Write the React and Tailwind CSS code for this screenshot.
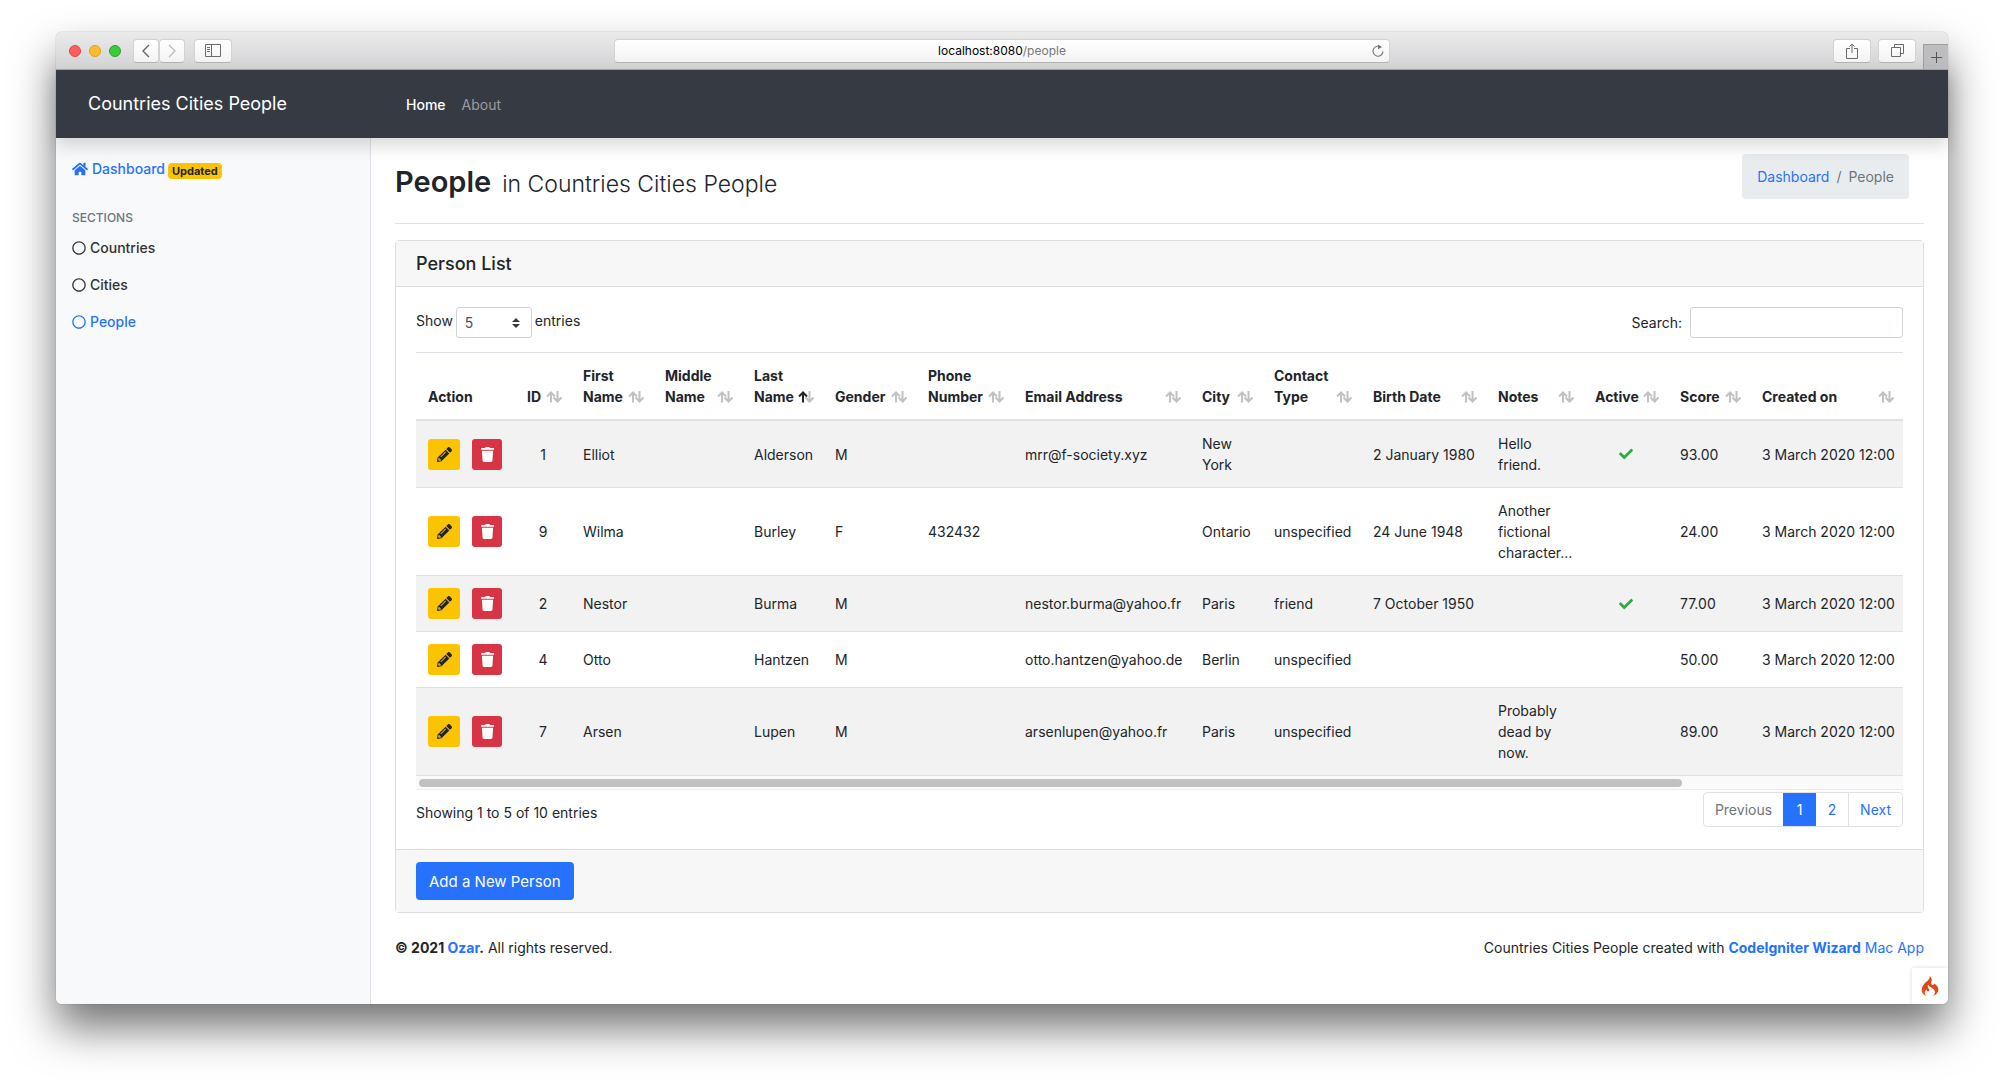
import React from "react";
import { FaHome, FaRegCircle, FaCheck, FaPencilAlt, FaTrash } from "react-icons/fa";
import { SiCodeigniter } from "react-icons/si";

const columns = [
  { label: "Action", width: 99, sort: null },
  { label: "ID", width: 56, sort: "none" },
  { label: "First Name", width: 82, sort: "none" },
  { label: "Middle Name", width: 89, sort: "none" },
  { label: "Last Name", width: 81, sort: "asc" },
  { label: "Gender", width: 93, sort: "none" },
  { label: "Phone Number", width: 97, sort: "none" },
  { label: "Email Address", width: 177, sort: "none" },
  { label: "City", width: 72, sort: "none" },
  { label: "Contact Type", width: 99, sort: "none" },
  { label: "Birth Date", width: 125, sort: "none" },
  { label: "Notes", width: 97, sort: "none" },
  { label: "Active", width: 85, sort: "none" },
  { label: "Score", width: 82, sort: "none" },
  { label: "Created on", width: 153, sort: "none" },
];

const people = [
  { id: 1, first: "Elliot", last: "Alderson", gender: "M", phone: "", email: "mrr@f-society.xyz", city: "New York", type: "", birth: "2 January 1980", notes: "Hello friend.", active: true, score: "93.00" },
  { id: 9, first: "Wilma", last: "Burley", gender: "F", phone: "432432", email: "", city: "Ontario", type: "unspecified", birth: "24 June 1948", notes: "Another fictional character...", active: false, score: "24.00" },
  { id: 2, first: "Nestor", last: "Burma", gender: "M", phone: "", email: "nestor.burma@yahoo.fr", city: "Paris", type: "friend", birth: "7 October 1950", notes: "", active: true, score: "77.00" },
  { id: 4, first: "Otto", last: "Hantzen", gender: "M", phone: "", email: "otto.hantzen@yahoo.de", city: "Berlin", type: "unspecified", birth: "", notes: "", active: false, score: "50.00" },
  { id: 7, first: "Arsen", last: "Lupen", gender: "M", phone: "", email: "arsenlupen@yahoo.fr", city: "Paris", type: "unspecified", birth: "", notes: "Probably dead by now.", active: false, score: "89.00" },
];

const chromeButton =
  "flex h-6 items-center justify-center rounded border border-[#d2d2d2] border-b-[#b4b4b4] bg-linear-to-b from-white to-[#f3f3f3] text-[#6b6b6b]";

function BrowserBar() {
  return (
    <header className="grid h-[38px] grid-cols-[1fr_41%_1fr] items-center rounded-t-md border-b border-[#a5a4a6] bg-linear-to-b from-[#ebebec] to-[#d3d3d5]">
      <div className="flex items-center pl-[13px]">
        <div className="flex gap-2">
          <span className="size-3 rounded-full border border-[#e2463f] bg-[#fc605b]" />
          <span className="size-3 rounded-full border border-[#e1a116] bg-[#fdbc2e]" />
          <span className="size-3 rounded-full border border-[#28a623] bg-[#3bcb3c]" />
        </div>
        <button aria-label="Back" className={`${chromeButton} ml-3 w-[26px]`}>
          <svg viewBox="0 0 10 14" className="h-3.5 w-2.5" fill="none" stroke="#666" strokeWidth="1.4"><path d="M8 1 2 7l6 6" /></svg>
        </button>
        <button aria-label="Forward" className={`${chromeButton} w-[26px]`}>
          <svg viewBox="0 0 10 14" className="h-3.5 w-2.5" fill="none" stroke="#bdbdbd" strokeWidth="1.4"><path d="m2 1 6 6-6 6" /></svg>
        </button>
        <button aria-label="Show sidebar" className={`${chromeButton} ml-[9px] w-[38px]`}>
          <svg viewBox="0 0 16 13" className="h-[13px] w-4" fill="none" stroke="#6b6b6b"><path d="M.5.5h15v12H.5zM6.5.5v12M2 3.5h3M2 5.5h3M2 7.5h3" /></svg>
        </button>
      </div>
      <div className="flex h-6 items-center rounded border border-[#d2d2d2] border-b-[#b4b4b4] bg-linear-to-b from-white to-[#f3f3f3] px-1">
        <span className="w-3.5" />
        <p className="flex-1 text-center text-xs text-black">localhost:8080<span className="text-[#777]">/people</span></p>
        <button aria-label="Reload">
          <svg viewBox="0 0 14 14" className="size-3.5" fill="none" stroke="#777" strokeWidth="1.1"><path d="M10.3 3.4A5 5 0 1 0 12 7.4" /><path d="M7 .6 10.6 3 7 5.4z" fill="#777" stroke="none" /></svg>
        </button>
      </div>
      <div className="flex items-center justify-end self-stretch">
        <button aria-label="Share" className={`${chromeButton} w-[38px]`}>
          <svg viewBox="0 0 12 16" className="h-4 w-3" fill="none" stroke="#6b6b6b"><path d="M4 5.5H.5v10h11v-10H8M6 10V1M3.5 3.5 6 1l2.500 2.500" /></svg>
        </button>
        <button aria-label="Show all tabs" className={`${chromeButton} ml-[7px] w-[38px]`}>
          <svg viewBox="0 0 13 13" className="size-[13px]" fill="none" stroke="#6b6b6b"><path d="M.5 3.500h9v9h-9zM3.500 3V.5h9v9H10" /></svg>
        </button>
        <button aria-label="New tab" className="ml-[7px] flex size-[25px] items-center justify-center self-end border-t border-l border-[#9f9fa0] bg-[#bdbdbf]">
          <svg viewBox="0 0 11 11" className="size-[11px]" stroke="#555"><path d="M5.500 0v11M0 5.500h11" /></svg>
        </button>
      </div>
    </header>
  );
}

function Sidebar() {
  return (
    <nav aria-label="Sections" className="w-[315px] shrink-0 border-r border-[#dee2e6] bg-[#f8f9fa] px-4 pt-5">
      <div className="flex h-[21px] items-center">
        <a href="#dashboard" className="flex items-center gap-1 font-medium text-[#2672ff]">
          <FaHome className="size-4" />
          Dashboard
        </a>
        <span className="mt-1 ml-[3px] rounded bg-[#fcc400] px-1 text-[11px] leading-4 font-bold text-[#212529]">Updated</span>
      </div>
      <h6 className="mt-[30px] text-xs leading-[18px] font-medium text-[#6c757d]">SECTIONS</h6>
      <ul className="mt-2.5 space-y-4">
        <li><a href="#countries" className="flex items-center gap-1 font-medium text-[#333]"><FaRegCircle className="size-3.5" />Countries</a></li>
        <li><a href="#cities" className="flex items-center gap-1 font-medium text-[#333]"><FaRegCircle className="size-3.5" />Cities</a></li>
        <li><a href="#people" className="flex items-center gap-1 font-medium text-[#2672ff]"><FaRegCircle className="size-3.5" />People</a></li>
      </ul>
    </nav>
  );
}

function SortIcon({ sort }) {
  return (
    <svg viewBox="0 0 16 12" className="mb-1 h-3 w-4 shrink-0" fill="none" strokeWidth="2">
      <path d="M11.500 0v10.500M7.500 6.500l4 4 4-4" stroke="#bfc1c2" />
      <path d="M5 11.500V1.500M1 5.500l4-4 4 4" stroke={sort === "asc" ? "#212529" : "#bfc1c2"} />
    </svg>
  );
}

function PeopleTable() {
  return (
    <div className="mt-3.5 overflow-hidden border-b border-[#ececec]">
      <table className="w-full table-fixed border-separate border-spacing-0">
        <colgroup>
          {columns.map((c) => <col key={c.label} style={{ width: c.width }} />)}
        </colgroup>
        <thead>
          <tr>
            {columns.map((c) => (
              <th key={c.label} scope="col" className="border-t border-b-2 border-[#dee2e6] py-3 pr-[9px] pl-3 text-left align-bottom font-bold">
                <div className="flex items-end justify-between">
                  <span>{c.label}</span>
                  {c.sort && <SortIcon sort={c.sort} />}
                </div>
              </th>
            ))}
          </tr>
        </thead>
        <tbody className="[&_td]:border-[#dee2e6] [&_td]:py-3 [&_td]:pl-3 [&_tr+tr_td]:border-t [&_tr:last-child_td]:border-b [&_tr:nth-child(odd)]:bg-[#f2f2f2]">
          {people.map((p) => (
            <tr key={p.id}>
              <td>
                <div className="flex gap-3">
                  <button aria-label={`Edit ${p.first}`} className="flex h-[31px] w-8 items-center justify-center rounded-[3px] bg-[#fcc400] text-[#212529]"><FaPencilAlt className="size-[15px]" /></button>
                  <button aria-label={`Delete ${p.first}`} className="flex h-[31px] w-[30px] items-center justify-center rounded-[3px] bg-[#d73446] text-white"><FaTrash className="h-[15px] w-[13px]" /></button>
                </div>
              </td>
              <td className="pr-3 text-center">{p.id}</td>
              <td>{p.first}</td>
              <td></td>
              <td>{p.last}</td>
              <td>{p.gender}</td>
              <td>{p.phone}</td>
              <td className="whitespace-nowrap">{p.email}</td>
              <td className="pr-3">{p.city}</td>
              <td>{p.type}</td>
              <td className="whitespace-nowrap">{p.birth}</td>
              <td className="pr-3">{p.notes}</td>
              <td className="pr-3">{p.active && <FaCheck title="Active" className="mx-auto size-3.5 text-[#35a744]" />}</td>
              <td>{p.score}</td>
              <td className="whitespace-nowrap">3 March 2020 12:00</td>
            </tr>
          ))}
        </tbody>
      </table>
      <div className="bg-[#fafafa] px-[3px] pt-[3px] pb-0.5">
        <div className="h-2 w-[85.3%] rounded-full bg-[#c1c1c1]" />
      </div>
    </div>
  );
}

export default function App() {
  return (
    <div className="min-h-screen bg-white px-14 py-8 font-['Inter',sans-serif] text-sm leading-[21px] text-[#212529]">
      <div className="flex min-h-[972px] flex-col rounded-md shadow-[0_0_1px_rgba(0,0,0,0.5),0_24px_44px_rgba(0,0,0,0.55)]">
        <BrowserBar />
        <div className="relative z-10 flex h-[68px] items-center bg-[#363a42] px-8 shadow-[0_8px_16px_rgba(0,0,0,0.15)]">
          <a href="#top" className="w-[318px] text-lg font-normal text-white">Countries Cities People</a>
          <nav aria-label="Main" className="flex gap-4">
            <a href="#home" className="font-medium text-white">Home</a>
            <a href="#about" className="text-[#9b9da1]">About</a>
          </nav>
        </div>
        <div className="relative flex flex-1 overflow-hidden rounded-b-md bg-white">
          <Sidebar />
          <main className="min-w-0 flex-1 px-6">
            <div className="flex h-[86px] items-start justify-between border-b border-[#dee2e6] pt-4 pr-[15px]">
              <h1 className="mt-2.5 flex items-baseline gap-[11px] text-[29px] leading-9 font-semibold">
                People <small className="text-[23px] font-light">in Countries Cities People</small>
              </h1>
              <ol className="flex rounded bg-[#e9ecef] px-[15px] py-3 text-[#6c757d]">
                <li><a href="#dashboard" className="text-[#2672ff]">Dashboard</a></li>
                <li className="pl-[7px]"><span className="pr-[7px]">/</span>People</li>
              </ol>
            </div>
            <section className="mt-4 rounded border border-[#dcdddf]">
              <h2 className="border-b border-[#dcdddf] bg-[#f7f7f7] px-5 py-3 text-lg leading-[21px] font-medium">Person List</h2>
              <div className="px-5 pt-5 pb-[22px]">
                <div className="flex justify-between">
                  <label className="flex items-start gap-[3px] leading-7">
                    Show
                    <span className="relative">
                      <select defaultValue="5" className="block h-[31px] w-[76px] appearance-none rounded-[3px] border border-[#ced4da] bg-white px-2 text-[#495057]">
                        <option>5</option>
                        <option>10</option>
                      </select>
                      <svg viewBox="0 0 8 10" className="pointer-events-none absolute top-[11px] right-3 h-2.5 w-2" fill="#343a40"><path d="M4 0 0 4h8zM4 10l4-4H0z" /></svg>
                    </span>
                    entries
                  </label>
                  <label className="flex items-center gap-2">
                    Search:
                    <input type="search" className="h-[31px] w-[213px] rounded-[3px] border border-[#ced4da] px-2" />
                  </label>
                </div>
                <PeopleTable />
                <div className="flex items-start justify-between pt-0.5">
                  <p className="pt-2.5">Showing 1 to 5 of 10 entries</p>
                  <div className="flex overflow-hidden rounded border border-[#dee2e6] leading-[33px] text-[#2672ff]">
                    <button className="px-[11px] text-[#6c757d]">Previous</button>
                    <button aria-current="page" className="-my-px w-[33px] bg-[#2672ff] text-white">1</button>
                    <button className="w-8">2</button>
                    <button className="border-l border-[#dee2e6] px-[11px]">Next</button>
                  </div>
                </div>
              </div>
              <div className="border-t border-[#dcdddf] bg-[#f7f7f7] px-5 py-3">
                <button className="h-[38px] rounded bg-[#2672ff] px-[13px] text-[15px] text-white">Add a New Person</button>
              </div>
            </section>
            <footer className="mt-6 flex justify-between">
              <p><strong>© 2021 <a href="#ozar" className="text-[#2672ff]">Ozar</a>.</strong> All rights reserved.</p>
              <p>Countries Cities People created with <a href="#wizard" className="text-[#2672ff]"><strong>CodeIgniter Wizard</strong> Mac App</a></p>
            </footer>
          </main>
          <button aria-label="Debug toolbar" className="absolute right-0 bottom-0 flex size-9 items-center justify-center bg-white shadow-[0_0_4px_rgba(0,0,0,0.15)]">
            <SiCodeigniter className="size-5 text-[#dd4814]" />
          </button>
        </div>
      </div>
    </div>
  );
}
